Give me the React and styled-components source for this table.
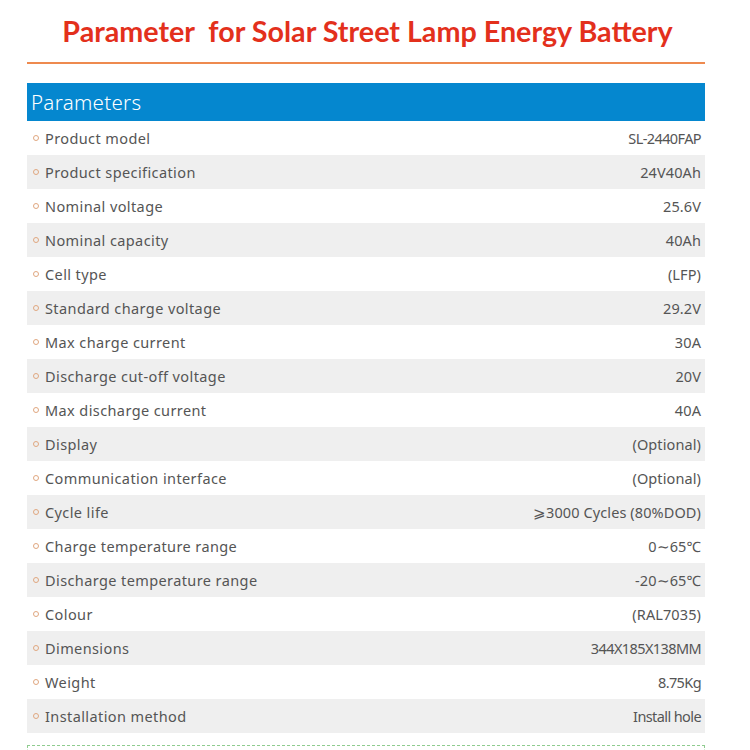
import React from "react";
import styled, { createGlobalStyle } from "styled-components";

const GlobalStyle = createGlobalStyle`
  body {
    margin: 0;
    background: #ffffff;
    font-family: "Noto Sans", "Open Sans", sans-serif;
  }
`;

const Page = styled.div`
  width: 750px;
  height: 750px;
  overflow: hidden;
  padding: 0 45px 0 27px;
  box-sizing: border-box;
`;

const Title = styled.h1`
  margin: 0;
  height: 62px;
  display: flex;
  align-items: center;
  justify-content: center;
  padding-left: 3px;
  font-family: Lato, "Open Sans", sans-serif;
  font-weight: 700;
  font-size: 28.7px;
  color: #e3301c;
  white-space: pre;
  border-bottom: 2px solid #ee8a4f;
`;

const Header = styled.div`
  margin-top: 19px;
  height: 38px;
  background: #0587cf;
  color: #ffffff;
  display: flex;
  align-items: center;
  padding-left: 4px;
  font-size: 20.5px;
  font-weight: 300;
  letter-spacing: 0.3px;
`;

const Row = styled.div`
  height: 34px;
  display: flex;
  align-items: center;
  justify-content: space-between;
  padding: 0 4px 1px 6px;
  box-sizing: border-box;
  background: ${(p) => (p.$shaded ? "#efefef" : "#ffffff")};
  color: #555555;
  font-size: 14.5px;
`;

const Label = styled.span`
  display: flex;
  align-items: center;
  gap: 6px;
  letter-spacing: 0.4px;
`;

const Dot = styled.span`
  width: 4px;
  height: 4px;
  border: 1px solid #e0a77f;
  border-radius: 50%;
`;

const Value = styled.span`
  letter-spacing: ${(p) => (p.$narrow ? "-0.6px" : "0.1px")};
`;

const Dashed = styled.div`
  margin-top: 12px;
  height: 30px;
  border: 1px dashed #8fcc8f;
  border-bottom: none;
`;

const rows = [
  ["Product model", "SL-2440FAP", true],
  ["Product specification", "24V40Ah"],
  ["Nominal voltage", "25.6V"],
  ["Nominal capacity", "40Ah"],
  ["Cell type", "(LFP)"],
  ["Standard charge voltage", "29.2V"],
  ["Max charge current", "30A"],
  ["Discharge cut-off voltage", "20V"],
  ["Max discharge current", "40A"],
  ["Display", "(Optional)"],
  ["Communication interface", "(Optional)"],
  ["Cycle life", "⩾3000 Cycles (80%DOD)"],
  ["Charge temperature range", "0∼65℃"],
  ["Discharge temperature range", "-20∼65℃"],
  ["Colour", "(RAL7035)"],
  ["Dimensions", "344X185X138MM", true],
  ["Weight", "8.75Kg", true],
  ["Installation method", "Install hole", true],
];

export default function App() {
  return (
    <>
      <GlobalStyle />
      <Page>
        <Title>Parameter  for Solar Street Lamp Energy Battery</Title>
        <Header>Parameters</Header>
        {rows.map(([label, value, narrow], i) => (
          <Row key={label} $shaded={i % 2 === 1}>
            <Label>
              <Dot />
              {label}
            </Label>
            <Value $narrow={narrow}>{value}</Value>
          </Row>
        ))}
        <Dashed />
      </Page>
    </>
  );
}
